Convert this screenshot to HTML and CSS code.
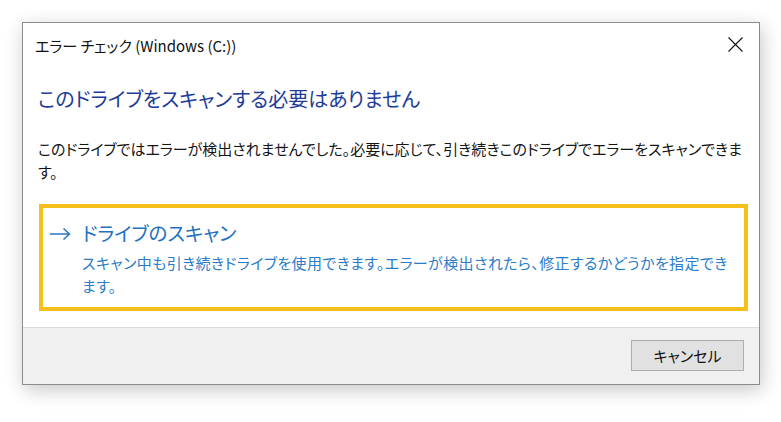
FILE: index.html
```html
<!DOCTYPE html>
<html lang="ja">
<head>
<meta charset="utf-8">
<title>エラー チェック</title>
<link rel="stylesheet" href="styles.css">
</head>
<body>
<div class="dialog">
  <div class="titlebar">
    <span class="title">エラー チェック (Windows (C:))</span>
    <svg class="close" width="15" height="15" viewBox="0 0 15 15"><path d="M0.5 0.5 L14.5 14.5 M14.5 0.5 L0.5 14.5" stroke="#111" stroke-width="1.1" fill="none"/></svg>
  </div>
  <div class="content">
    <h1 class="heading">このドライブをスキャンする必要はありません</h1>
    <p class="body">このドライブではエラーが検出されませんでした。必要に応じて、引き続きこのドライブでエラーをスキャンできます。</p>
    <div class="cmdbox">
      <div class="cmdrow">
        <svg class="arrow" width="22" height="14" viewBox="0 0 22 14"><path d="M1 7 H20.5 M14.5 1.5 L20.5 7 L14.5 12.5" stroke="#2a76c2" stroke-width="1.5" fill="none"/></svg>
        <div class="cmdtext">
          <div class="cmdtitle">ドライブのスキャン</div>
          <div class="cmdsub">スキャン中も引き続きドライブを使用できます。エラーが検出されたら、修正するかどうかを指定できます。</div>
        </div>
      </div>
    </div>
  </div>
  <div class="footer">
    <button class="btn">キャンセル</button>
  </div>
</div>
</body>
</html>
```
FILE: styles.css
```css
html, body {
  margin: 0;
  padding: 0;
  background: #ffffff;
}
body {
  font-family: "Noto Sans CJK JP", "Noto Sans", sans-serif;
  font-feature-settings: "palt";
  width: 781px;
  height: 422px;
  overflow: hidden;
}
.dialog {
  margin: 22px 0 0 22px;
  width: 738px;
  height: 363px;
  box-sizing: border-box;
  border: 1px solid #8c8c8c;
  background: #ffffff;
  box-shadow: 2px 5px 18px rgba(0, 0, 0, 0.22);
  display: flex;
  flex-direction: column;
}
.titlebar {
  height: 45px;
  display: flex;
  align-items: center;
  justify-content: space-between;
  padding: 0 16px 0 12px;
}
.title {
  font-size: 15px;
  color: #111;
  line-height: 20px;
}
.close {
  display: block;
  margin-top: -2px;
}
.content {
  flex: 1;
  padding: 0 11px 0 15px;
}
.heading {
  margin: 16px 0 0 0;
  font-size: 20px;
  font-weight: 400;
  line-height: 30px;
  color: #1e3c98;
}
.body {
  margin: 23px 0 0 0;
  font-size: 15px;
  line-height: 23px;
  color: #141414;
  max-width: 708px;
}
.cmdbox {
  margin: 21px 0 0 1px;
  border: 4px solid #f5bf1c;
  padding: 11px 6px 10px 6px;
}
.cmdrow {
  display: flex;
  align-items: flex-start;
}
.arrow {
  display: block;
  margin-top: 8px;
  width: 22px;
  flex: none;
}
.cmdtext {
  margin-left: 11px;
  flex: 1;
}
.cmdtitle {
  font-size: 19.5px;
  line-height: 28px;
  color: #1f72c2;
}
.cmdsub {
  margin-top: 4px;
  font-size: 15px;
  letter-spacing: 0.4px;
  line-height: 23px;
  color: #2c7cc7;
  max-width: 652px;
}
.footer {
  height: 57px;
  border-top: 1px solid #dcdcdc;
  background: #f0f0f0;
  display: flex;
  justify-content: flex-end;
  align-items: flex-start;
  padding: 12px 15px 0 0;
  box-sizing: border-box;
}
.btn {
  width: 113px;
  height: 31px;
  border: 1px solid #adadad;
  background: #e1e1e1;
  font-family: "Noto Sans CJK JP", "Noto Sans", sans-serif;
  font-feature-settings: "palt";
  font-size: 15px;
  color: #111;
  padding: 0;
}
```
